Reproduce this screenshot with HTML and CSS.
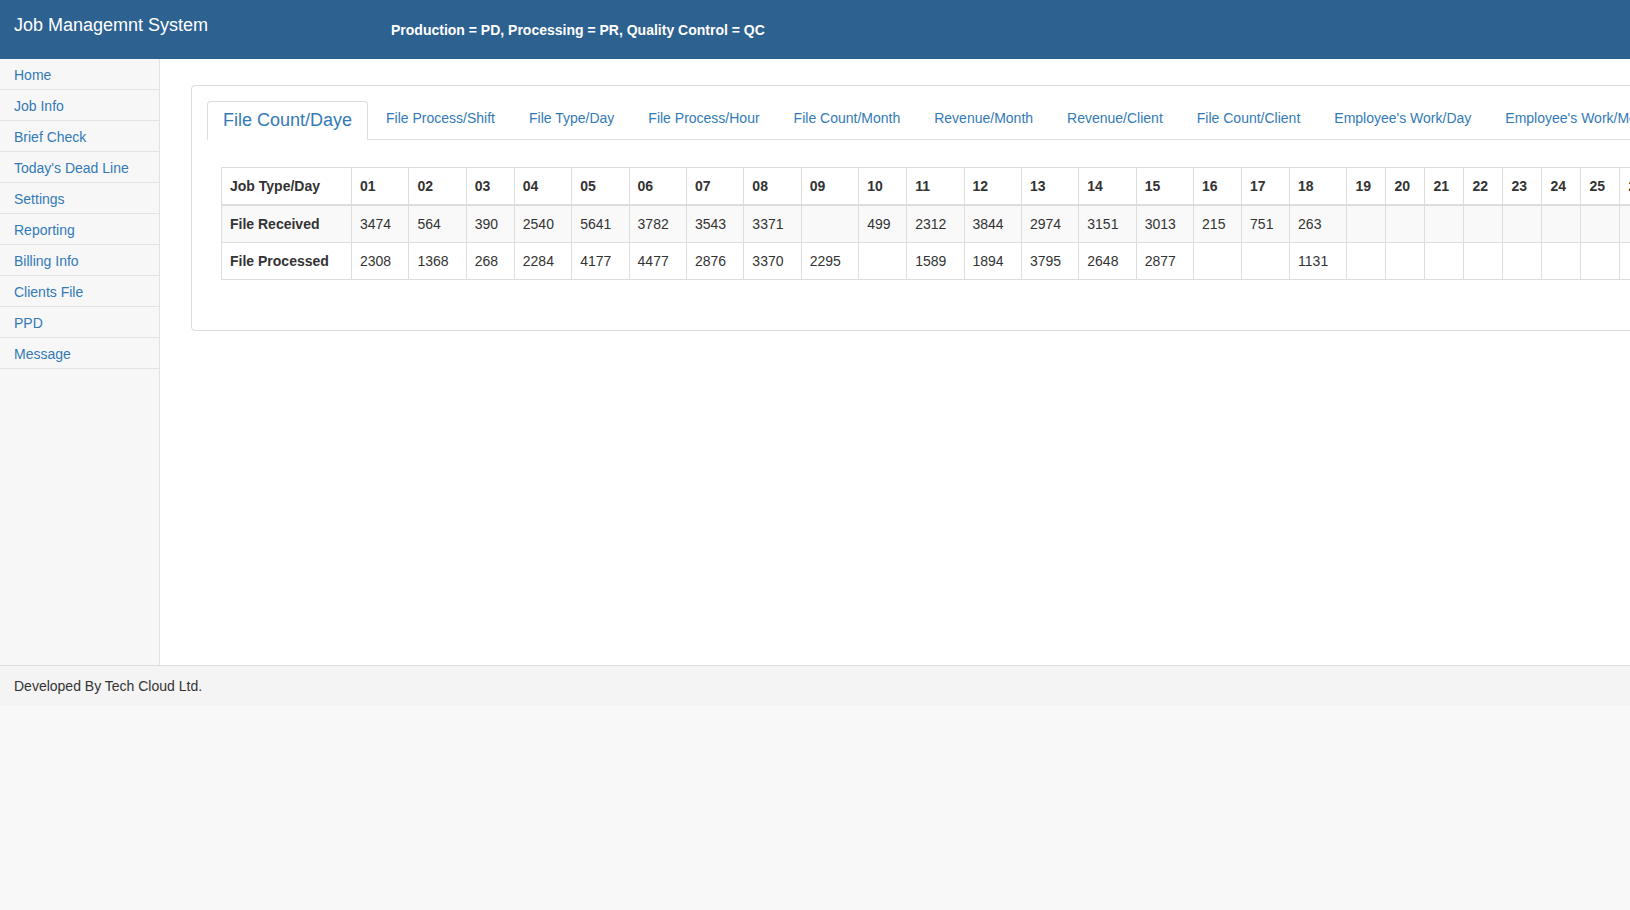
FILE: index.html
```html
<!DOCTYPE html>
<html lang="en">
<head>
<meta charset="utf-8">
<title>Job Managemnt System</title>
<link rel="stylesheet" href="styles.css">
</head>
<body>
<header class="topbar">
  <div class="brand">Job Managemnt System</div>
  <div class="legend">Production = PD, Processing = PR, Quality Control = QC</div>
</header>
<div class="layout">
  <nav class="sidebar">
    <a class="side-link" href="#">Home</a>
    <a class="side-link" href="#">Job Info</a>
    <a class="side-link" href="#">Brief Check</a>
    <a class="side-link" href="#">Today's Dead Line</a>
    <a class="side-link" href="#">Settings</a>
    <a class="side-link" href="#">Reporting</a>
    <a class="side-link" href="#">Billing Info</a>
    <a class="side-link" href="#">Clients File</a>
    <a class="side-link" href="#">PPD</a>
    <a class="side-link" href="#">Message</a>
  </nav>
  <main class="main">
    <section class="panel">
      <ul class="tabs">
        <li class="tab tab-active"><a href="#">File Count/Daye</a></li>
        <li class="tab"><a href="#">File Process/Shift</a></li>
        <li class="tab"><a href="#">File Type/Day</a></li>
        <li class="tab"><a href="#">File Process/Hour</a></li>
        <li class="tab"><a href="#">File Count/Month</a></li>
        <li class="tab"><a href="#">Revenue/Month</a></li>
        <li class="tab"><a href="#">Revenue/Client</a></li>
        <li class="tab"><a href="#">File Count/Client</a></li>
        <li class="tab"><a href="#">Employee's Work/Day</a></li>
        <li class="tab"><a href="#">Employee's Work/Month</a></li>
      </ul>
      <div class="tab-content">
        <table class="grid">
          <thead>
            <tr>
              <th class="wl">Job Type/Day</th>
              <th class="w4">01</th><th class="w4">02</th><th class="w3">03</th><th class="w4">04</th>
              <th class="w4">05</th><th class="w4">06</th><th class="w4">07</th><th class="w4">08</th>
              <th class="w4">09</th><th class="w3">10</th><th class="w4">11</th><th class="w4">12</th>
              <th class="w4">13</th><th class="w4">14</th><th class="w4">15</th><th class="w3">16</th>
              <th class="w3">17</th><th class="w4">18</th><th class="w2">19</th><th class="w2">20</th>
              <th class="w2">21</th><th class="w2">22</th><th class="w2">23</th><th class="w2">24</th>
              <th class="w2">25</th><th class="w2">26</th><th class="w2">27</th><th class="w2">28</th>
              <th class="w2">29</th><th class="w2">30</th><th class="w2">31</th>
            </tr>
          </thead>
          <tbody>
            <tr class="striped">
              <th>File Received</th>
              <td>3474</td><td>564</td><td>390</td><td>2540</td><td>5641</td><td>3782</td><td>3543</td><td>3371</td>
              <td></td><td>499</td><td>2312</td><td>3844</td><td>2974</td><td>3151</td><td>3013</td><td>215</td>
              <td>751</td><td>263</td><td></td><td></td><td></td><td></td><td></td><td></td>
              <td></td><td></td><td></td><td></td><td></td><td></td><td></td>
            </tr>
            <tr>
              <th>File Processed</th>
              <td>2308</td><td>1368</td><td>268</td><td>2284</td><td>4177</td><td>4477</td><td>2876</td><td>3370</td>
              <td>2295</td><td></td><td>1589</td><td>1894</td><td>3795</td><td>2648</td><td>2877</td><td></td>
              <td></td><td>1131</td><td></td><td></td><td></td><td></td><td></td><td></td>
              <td></td><td></td><td></td><td></td><td></td><td></td><td></td>
            </tr>
          </tbody>
        </table>
      </div>
    </section>
  </main>
</div>
<footer class="footer">Developed By Tech Cloud Ltd.</footer>
</body>
</html>
```
FILE: styles.css
```css
* { box-sizing: border-box; }

html, body {
  margin: 0;
  padding: 0;
}

body {
  background: #f8f8f8;
  font-family: "Liberation Sans", Arial, Helvetica, sans-serif;
  font-size: 14px;
  line-height: 20px;
  color: #333;
  overflow: hidden;
}

a { text-decoration: none; color: #337ab7; }

.topbar {
  height: 59px;
  background: #2d6190;
  color: #fff;
  display: flex;
  align-items: flex-start;
}

.brand {
  font-size: 18px;
  line-height: 20px;
  padding: 15px 0 0 14px;
  width: 391px;
  flex: none;
}

.legend {
  font-weight: bold;
  font-size: 14px;
  line-height: 20px;
  padding-top: 20px;
  white-space: nowrap;
}

.layout {
  display: flex;
  height: 606px;
}

.sidebar {
  width: 160px;
  flex: none;
  background: #f7f7f7;
  border-right: 1px solid #e3e3e3;
  display: flex;
  flex-direction: column;
}

.side-link {
  display: block;
  padding: 6px 14px 4px;
  line-height: 20px;
  border-bottom: 1px solid #e3e3e3;
  color: #337ab7;
  white-space: nowrap;
}

.main {
  flex: 1;
  min-width: 0;
  background: #fff;
  overflow: hidden;
  padding: 26px 0 0 31px;
}

.panel {
  width: max-content;
  border: 1px solid #ddd;
  border-radius: 4px;
  padding: 12px 15px 15px;
  background: #fff;
}

.tabs {
  list-style: none;
  margin: 0;
  padding: 0;
  display: flex;
  align-items: flex-end;
  border-bottom: 1px solid #ddd;
}

.tab {
  margin-bottom: -1px;
  margin-right: 2px;
}

.tab a {
  display: block;
  padding: 9px 15px 11px;
  line-height: 20px;
  border: 1px solid transparent;
  border-radius: 4px 4px 0 0;
  color: #337ab7;
  white-space: nowrap;
}

.tab-active a {
  font-size: 18px;
  padding: 8px 15px 9px;
  background: #fff;
  border-color: #ddd;
  border-bottom-color: transparent;
}

.tab-content {
  padding: 27px 14px 15px;
}

.grid {
  border-collapse: collapse;
  margin-bottom: 20px;
}

.grid th,
.grid td {
  box-sizing: content-box;
  border: 1px solid #ddd;
  padding: 8px;
  line-height: 20px;
  text-align: left;
  vertical-align: top;
  white-space: nowrap;
}

.grid th { font-weight: bold; }

.grid thead th {
  border-bottom: 2px solid #ddd;
  vertical-align: bottom;
}

.grid .striped th,
.grid .striped td { background: #f9f9f9; }

.grid .wl { width: 113px; }
.grid .w4 { width: 40.4px; }
.grid .w3 { width: 31px; }
.grid .w2 { width: 22px; }

.footer {
  background: #f4f4f4;
  border-top: 1px solid #ddd;
  padding: 10px 14px;
  line-height: 20px;
  color: #333;
}
```
